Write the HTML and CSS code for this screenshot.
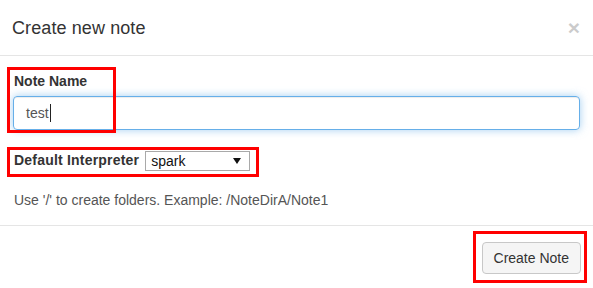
FILE: index.html
```html
<!DOCTYPE html>
<html lang="en">

<head>
    <meta charset="UTF-8">
    <title>Create new note</title>
    <link rel="stylesheet" href="styles.css">
</head>

<body>

    <div class="modal">
        <div class="modal-header">
            <button class="close" type="button">&times;</button>
            <h4 class="modal-title">Create new note</h4>
        </div>

        <div class="modal-body">
            <div class="form-group">
                <label class="control-label" for="noteName">Note Name</label>
                <div class="form-control" id="noteName">test<span class="caret"></span></div>
            </div>

            <div class="interpreter-row">
                <label class="control-label" for="interpreter">Default Interpreter</label>
                <span class="select-wrap">
                    <select id="interpreter">
                        <option>spark</option>
                        <option>md</option>
                        <option>sh</option>
                    </select>
                    <svg class="select-arrow" width="8" height="6" viewBox="0 0 8 6">
                        <path d="M0 0 L8 0 L4 6 Z" fill="#111" />
                    </svg>
                </span>
            </div>

            <p class="help">Use '/' to create folders. Example: /NoteDirA/Note1</p>
        </div>

        <div class="modal-footer">
            <button class="btn" type="button">Create Note</button>
        </div>

        <!-- annotation boxes -->
        <div class="mark mark-name"></div>
        <div class="mark mark-interp"></div>
        <div class="mark mark-btn"></div>
    </div>

</body>

</html>
```

FILE: styles.css
```css
* {
    box-sizing: border-box;
}

body {
    margin: 0;
    background: #fff;
    font-family: "Liberation Sans", Arial, Helvetica, sans-serif;
    font-size: 14px;
    line-height: 20px;
    color: #333;
}

.modal {
    position: relative;
    width: 593px;
    height: 288px;
    background: #fff;
}

.modal-header {
    padding: 15px 13px 14px 12px;
    border-bottom: 1px solid #e5e5e5;
}

.modal-title {
    margin: 0;
    font-size: 18px;
    font-weight: normal;
    line-height: 26px;
    letter-spacing: 0.1px;
    color: #333;
}

.close {
    float: right;
    margin-top: 2px;
    padding: 0;
    border: none;
    background: transparent;
    font-family: "Liberation Sans", Arial, sans-serif;
    font-size: 21px;
    font-weight: bold;
    line-height: 1;
    color: #000;
    opacity: 0.2;
    cursor: pointer;
}

.modal-body {
    padding: 15px 13px;
}

.control-label {
    display: block;
    font-weight: bold;
    margin-bottom: 5px;
    margin-left: 1px;
}

.form-control {
    height: 34px;
    padding: 6px 12px;
    border: 1px solid #66afe9;
    border-radius: 4px;
    color: #555;
    line-height: 20px;
    box-shadow: inset 0 1px 1px rgba(0, 0, 0, 0.075), 0 0 8px rgba(102, 175, 233, 0.6);
}

.caret {
    display: inline-block;
    width: 1px;
    height: 18px;
    margin-left: 1px;
    vertical-align: -4px;
    background: #222;
}

.interpreter-row {
    display: flex;
    align-items: center;
    height: 30px;
    margin-top: 15px;
}

.interpreter-row .control-label {
    display: inline-block;
    margin: 0 6px 0 1px;
    letter-spacing: 0.2px;
}

.select-wrap {
    position: relative;
    display: inline-block;
    margin-top: 1px;
}

.select-wrap select {
    -webkit-appearance: none;
    appearance: none;
    width: 105px;
    height: 20px;
    padding: 0 5px;
    border: 1px solid #a9a9a9;
    border-radius: 0;
    background: #fff;
    font-family: "Liberation Sans", Arial, sans-serif;
    font-size: 14px;
    color: #111;
}

.select-arrow {
    position: absolute;
    right: 9px;
    top: 7px;
    pointer-events: none;
}

.help {
    margin: 15px 0 0 1px;
    color: #555;
}

.modal-footer {
    padding: 16px 12px 14px;
    border-top: 1px solid #e5e5e5;
    text-align: right;
}

.btn {
    height: 32px;
    padding: 0 11px;
    border: 1px solid #c8c8c8;
    border-radius: 4px;
    background: #f5f5f5;
    font-family: "Liberation Sans", Arial, sans-serif;
    font-size: 14px;
    color: #333;
    cursor: pointer;
}

.mark {
    position: absolute;
    border: 3px solid #f00;
    pointer-events: none;
}

.mark-name {
    left: 7px;
    top: 67px;
    width: 109px;
    height: 66px;
}

.mark-interp {
    left: 7px;
    top: 147px;
    width: 252px;
    height: 30px;
}

.mark-btn {
    left: 473px;
    top: 231px;
    width: 114px;
    height: 52px;
}
```
